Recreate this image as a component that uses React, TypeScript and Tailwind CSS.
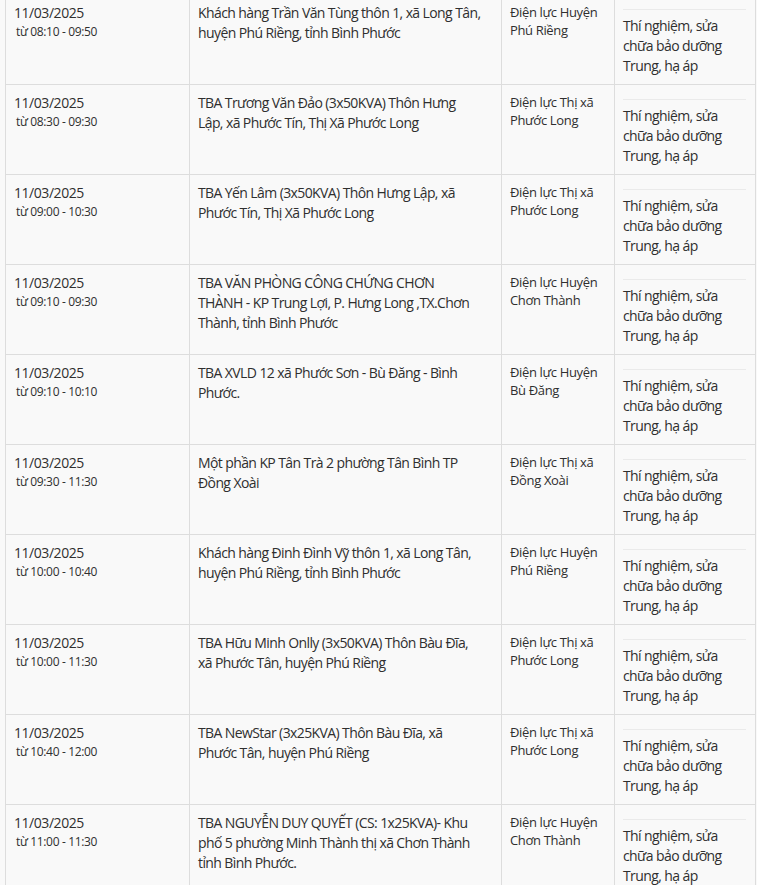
import React from 'react'

type Row = {
  time: string
  place: string[]
  unit: string[]
}

const rows: Row[] = [
  { time: '08:10 - 09:50', place: ['Khách hàng Trần Văn Tùng thôn 1, xã Long Tân,', 'huyện Phú Riềng, tỉnh Bình Phước'], unit: ['Điện lực Huyện', 'Phú Riềng'] },
  { time: '08:30 - 09:30', place: ['TBA Trương Văn Đảo (3x50KVA) Thôn Hưng', 'Lập, xã Phước Tín, Thị Xã Phước Long'], unit: ['Điện lực Thị xã', 'Phước Long'] },
  { time: '09:00 - 10:30', place: ['TBA Yến Lâm (3x50KVA) Thôn Hưng Lập, xã', 'Phước Tín, Thị Xã Phước Long'], unit: ['Điện lực Thị xã', 'Phước Long'] },
  { time: '09:10 - 09:30', place: ['TBA VĂN PHÒNG CÔNG CHỨNG CHƠN', 'THÀNH - KP Trung Lợi, P. Hưng Long ,TX.Chơn', 'Thành, tỉnh Bình Phước'], unit: ['Điện lực Huyện', 'Chơn Thành'] },
  { time: '09:10 - 10:10', place: ['TBA XVLD 12 xã Phước Sơn - Bù Đăng - Bình', 'Phước.'], unit: ['Điện lực Huyện', 'Bù Đăng'] },
  { time: '09:30 - 11:30', place: ['Một phần KP Tân Trà 2 phường Tân Bình TP', 'Đồng Xoài'], unit: ['Điện lực Thị xã', 'Đồng Xoài'] },
  { time: '10:00 - 10:40', place: ['Khách hàng Đinh Đình Vỹ thôn 1, xã Long Tân,', 'huyện Phú Riềng, tỉnh Bình Phước'], unit: ['Điện lực Huyện', 'Phú Riềng'] },
  { time: '10:00 - 11:30', place: ['TBA Hữu Minh Onlly (3x50KVA) Thôn Bàu Đĩa,', 'xã Phước Tân, huyện Phú Riềng'], unit: ['Điện lực Thị xã', 'Phước Long'] },
  { time: '10:40 - 12:00', place: ['TBA NewStar (3x25KVA) Thôn Bàu Đĩa, xã', 'Phước Tân, huyện Phú Riềng'], unit: ['Điện lực Thị xã', 'Phước Long'] },
  { time: '11:00 - 11:30', place: ['TBA NGUYỄN DUY QUYẾT (CS: 1x25KVA)- Khu', 'phố 5 phường Minh Thành thị xã Chơn Thành', 'tỉnh Bình Phước.'], unit: ['Điện lực Huyện', 'Chơn Thành'] },
]

function Lines({ lines }: { lines: string[] }) {
  return (
    <>
      {lines.map((l) => (
        <span key={l} className="block whitespace-nowrap">{l}</span>
      ))}
    </>
  )
}

const cell = 'border border-[#ddd] pl-[8px] pr-[9px] pt-[8px] pb-[8px] align-top'

export default function App() {
  return (
    <div
      className="h-[885px] overflow-hidden bg-[#f9f9f9] text-[#2f2f2f]"
      style={{ fontFamily: '"Segoe UI", "Open Sans", "Noto Sans", sans-serif' }}
    >
      <table className="-mt-[6px] ml-[5px] w-[750px] table-fixed border-collapse">
        <colgroup>
          <col className="w-[184px]" />
          <col className="w-[312px]" />
          <col className="w-[113px]" />
          <col className="w-[141px]" />
        </colgroup>
        <tbody>
          {rows.map((r, i) => (
            <tr key={i} className="h-[90px]">
              <td className={cell}>
                <div className="text-[14px] leading-[20px] tracking-[-0.45px]">11/03/2025</div>
                <div className="ml-[2px] text-[12px] leading-[18px] tracking-[-0.35px]">từ {r.time}</div>
              </td>
              <td className={`${cell} text-[14px] leading-[20px] tracking-[-0.6px]`}>
                <Lines lines={r.place} />
              </td>
              <td className={`${cell} text-[13px] leading-[18px] tracking-[-0.35px]`}>
                <Lines lines={r.unit} />
              </td>
              <td className={`${cell} text-[14px] leading-[20px] tracking-[-0.6px]`}>
                <hr className="mt-[6px] mb-[6px] border-t border-[#eaeaea]" />
                <span className="block">Thí nghiệm, sửa</span>
                <span className="block">chữa bảo dưỡng</span>
                <span className="block">Trung, hạ áp</span>
              </td>
            </tr>
          ))}
        </tbody>
      </table>
    </div>
  )
}
